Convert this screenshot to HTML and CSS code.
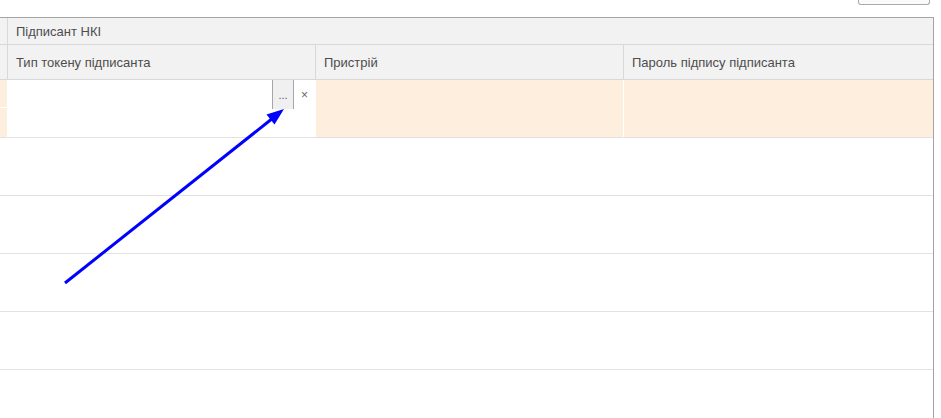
FILE: index.html
```html
<!DOCTYPE html>
<html lang="uk">
<head>
    <meta charset="UTF-8">
    <title>Підписант НКІ</title>
    <link rel="stylesheet" href="styles.css">
</head>
<body>
<div class="page">
    <div class="topbar"><span class="top-btn"></span></div>
    <div class="grid">
        <!--шапка-->
        <div class="row head head-group">
            <div class="stub"></div>
            <div class="cell span3">Підписант НКІ</div>
        </div>
        <div class="row head head-cols">
            <div class="stub"></div>
            <div class="cell">Тип токену підписанта</div>
            <div class="cell">Пристрій</div>
            <div class="cell last">Пароль підпису підписанта</div>
        </div>
        <!--поточний рядок-->
        <div class="row data current">
            <div class="stub"><i></i><i></i></div>
            <div class="cell edit">
                <div class="field">
                    <span class="field-input"></span>
                    <span class="pick">...</span>
                    <span class="clear">&times;</span>
                </div>
            </div>
            <div class="cell"></div>
            <div class="cell last"></div>
        </div>
        <div class="row data"></div>
        <div class="row data"></div>
        <div class="row data"></div>
        <div class="row data"></div>
        <div class="row data"></div>
    </div>
    <!--стрілка-->
    <svg class="arrow" width="300" height="300" viewBox="0 0 300 300">
        <line x1="65" y1="283" x2="273" y2="118" stroke="#0000ff" stroke-width="3"/>
        <polygon points="284,109 274.5,124.5 266.5,114.5" fill="#0000ff"/>
    </svg>
</div>
</body>
</html>
```

FILE: styles.css
```css
* {
    padding: 0;
    margin: 0;
    box-sizing: border-box;
}

body {
    background: #fff;
    font-family: "Liberation Sans", Arial, sans-serif;
    font-size: 13px;
    color: #4d4d4d;
}

.page {
    position: relative;
    width: 941px;
    height: 418px;
    overflow: hidden;
}

.topbar {
    height: 17px;
    display: flex;
    justify-content: flex-end;
    padding-right: 11px;
}

.top-btn {
    display: block;
    width: 72px;
    height: 6px;
    margin-top: -1px;
    border: 1px solid #a9a9a9;
    border-top: 0;
    border-radius: 0 0 3px 3px;
    background: #fafafa;
}

.grid {
    width: 934px;
    border-top: 1px solid #a4a4a4;
    border-right: 1px solid #a4a4a4;
}

.row {
    display: grid;
    grid-template-columns: 8px 308px 308px 1fr;
}

.head {
    background: #f2f2f2;
    border-bottom: 1px solid #d8d8d8;
}

.head .stub {
    border-right: 1px solid #d8d8d8;
}

.head .cell {
    padding-left: 8px;
    display: flex;
    align-items: center;
    border-right: 1px solid #d8d8d8;
    white-space: nowrap;
}

.head .cell.last,
.head .cell.span3 {
    border-right: 0;
}

.span3 {
    grid-column: 2 / 5;
}

.head-group {
    height: 27px;
}

.head-cols {
    height: 35px;
}

.data {
    height: 58px;
    border-bottom: 1px solid #e2e2e2;
}

.current .stub {
    display: flex;
    flex-direction: column;
    border-right: 1px solid #fff;
}

.current .stub i {
    display: block;
    background: #fdeedd;
}

.current .stub i:first-child {
    height: 28px;
    border-bottom: 1px solid #fff;
}

.current .stub i:last-child {
    flex: 1;
}

.current .cell {
    background: #fdeedd;
    border-right: 1px solid #fff;
}

.current .cell.last {
    border-right: 0;
}

.current .cell.edit {
    background: #fff;
}

.field {
    display: flex;
    height: 29px;
}

.field-input {
    flex: 1;
}

.pick {
    width: 22px;
    background: #f0f0f0;
    border-left: 1px solid #a6a6a6;
    border-right: 1px solid #a6a6a6;
    text-align: center;
    line-height: 30px;
    font-size: 11px;
    color: #555;
}

.clear {
    width: 21px;
    text-align: center;
    line-height: 30px;
    font-size: 12px;
    color: #666;
}

.arrow {
    position: absolute;
    left: 0;
    top: 0;
}
```
